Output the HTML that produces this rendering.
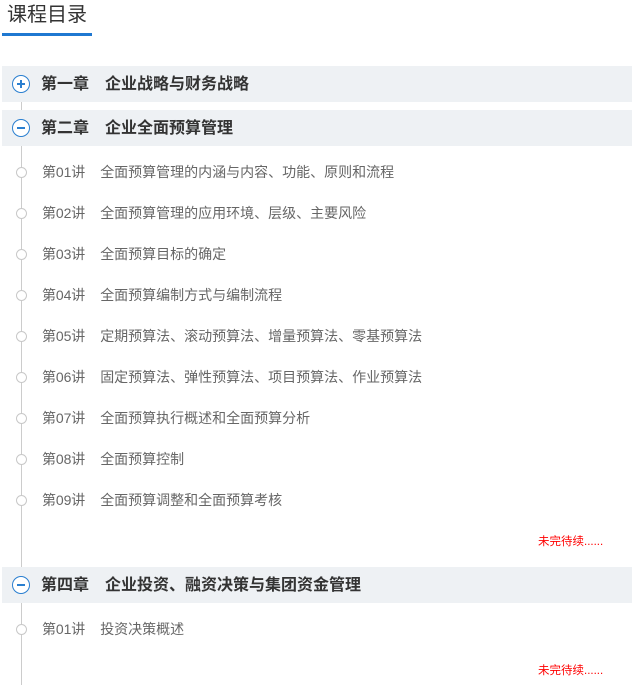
<!DOCTYPE html>
<html><head><meta charset="utf-8"><style>
body{margin:0;width:632px;height:685px;background:#fff;position:relative;overflow:hidden;font-family:"Liberation Sans","Noto Sans CJK SC",sans-serif}
.a{position:absolute;white-space:nowrap}
.title{left:7px;top:2px;font-size:20px;color:#333;line-height:26px}
.ul{left:2px;top:33px;width:90px;height:3px;background:#1f78d1}
.line{left:21px;width:1px;background:#ccc}
.bar{left:2px;width:630px;height:36px;background:#eef1f4}
.ch{left:41px;font-size:16px;font-weight:bold;color:#333;line-height:36px;margin-top:1px}
.ch span{margin-left:16px}
.ic{left:12px;width:16px;height:16px;border:1.5px solid #2a7fd0;border-radius:50%;background:#fff}
.ic:before{content:"";position:absolute;left:4px;top:7.25px;width:8px;height:1.5px;background:#2a7fd0}
.ic.p:after{content:"";position:absolute;left:7.25px;top:4px;width:1.5px;height:8px;background:#2a7fd0}
.dot{left:16px;width:9px;height:9px;border:1px solid #c8c8c8;border-radius:50%;background:#fff}
.it{left:42px;font-size:14px;color:#666;line-height:18px;letter-spacing:-0.1px}
.it span{margin-left:15px;letter-spacing:0}
.more{left:538px;font-size:11.5px;color:#f00;line-height:14px}
</style></head><body>
<div class="a title">课程目录</div>
<div class="a ul"></div>
<div class="a line" style="top:93px;height:592px"></div>
<div class="a bar" style="top:66px"></div>
<div class="a ch" style="top:66px">第一章<span>企业战略与财务战略</span></div>
<div class="a ic p" style="top:75px"></div>
<div class="a bar" style="top:110px"></div>
<div class="a ch" style="top:110px">第二章<span>企业全面预算管理</span></div>
<div class="a ic" style="top:119px"></div>

<div class="a dot" style="top:167px"></div><div class="a it" style="top:163px">第01讲<span>全面预算管理的内涵与内容、功能、原则和流程</span></div>
<div class="a dot" style="top:208px"></div><div class="a it" style="top:204px">第02讲<span>全面预算管理的应用环境、层级、主要风险</span></div>
<div class="a dot" style="top:249px"></div><div class="a it" style="top:245px">第03讲<span>全面预算目标的确定</span></div>
<div class="a dot" style="top:290px"></div><div class="a it" style="top:286px">第04讲<span>全面预算编制方式与编制流程</span></div>
<div class="a dot" style="top:331px"></div><div class="a it" style="top:327px">第05讲<span>定期预算法、滚动预算法、增量预算法、零基预算法</span></div>
<div class="a dot" style="top:372px"></div><div class="a it" style="top:368px">第06讲<span>固定预算法、弹性预算法、项目预算法、作业预算法</span></div>
<div class="a dot" style="top:413px"></div><div class="a it" style="top:409px">第07讲<span>全面预算执行概述和全面预算分析</span></div>
<div class="a dot" style="top:454px"></div><div class="a it" style="top:450px">第08讲<span>全面预算控制</span></div>
<div class="a dot" style="top:495px"></div><div class="a it" style="top:491px">第09讲<span>全面预算调整和全面预算考核</span></div>
<div class="a more" style="top:535px">未完待续......</div>

<div class="a bar" style="top:567px"></div>
<div class="a ch" style="top:567px">第四章<span>企业投资、融资决策与集团资金管理</span></div>
<div class="a ic" style="top:576px"></div>
<div class="a dot" style="top:624px"></div><div class="a it" style="top:620px">第01讲<span>投资决策概述</span></div>
<div class="a more" style="top:664px">未完待续......</div>
</body></html>
